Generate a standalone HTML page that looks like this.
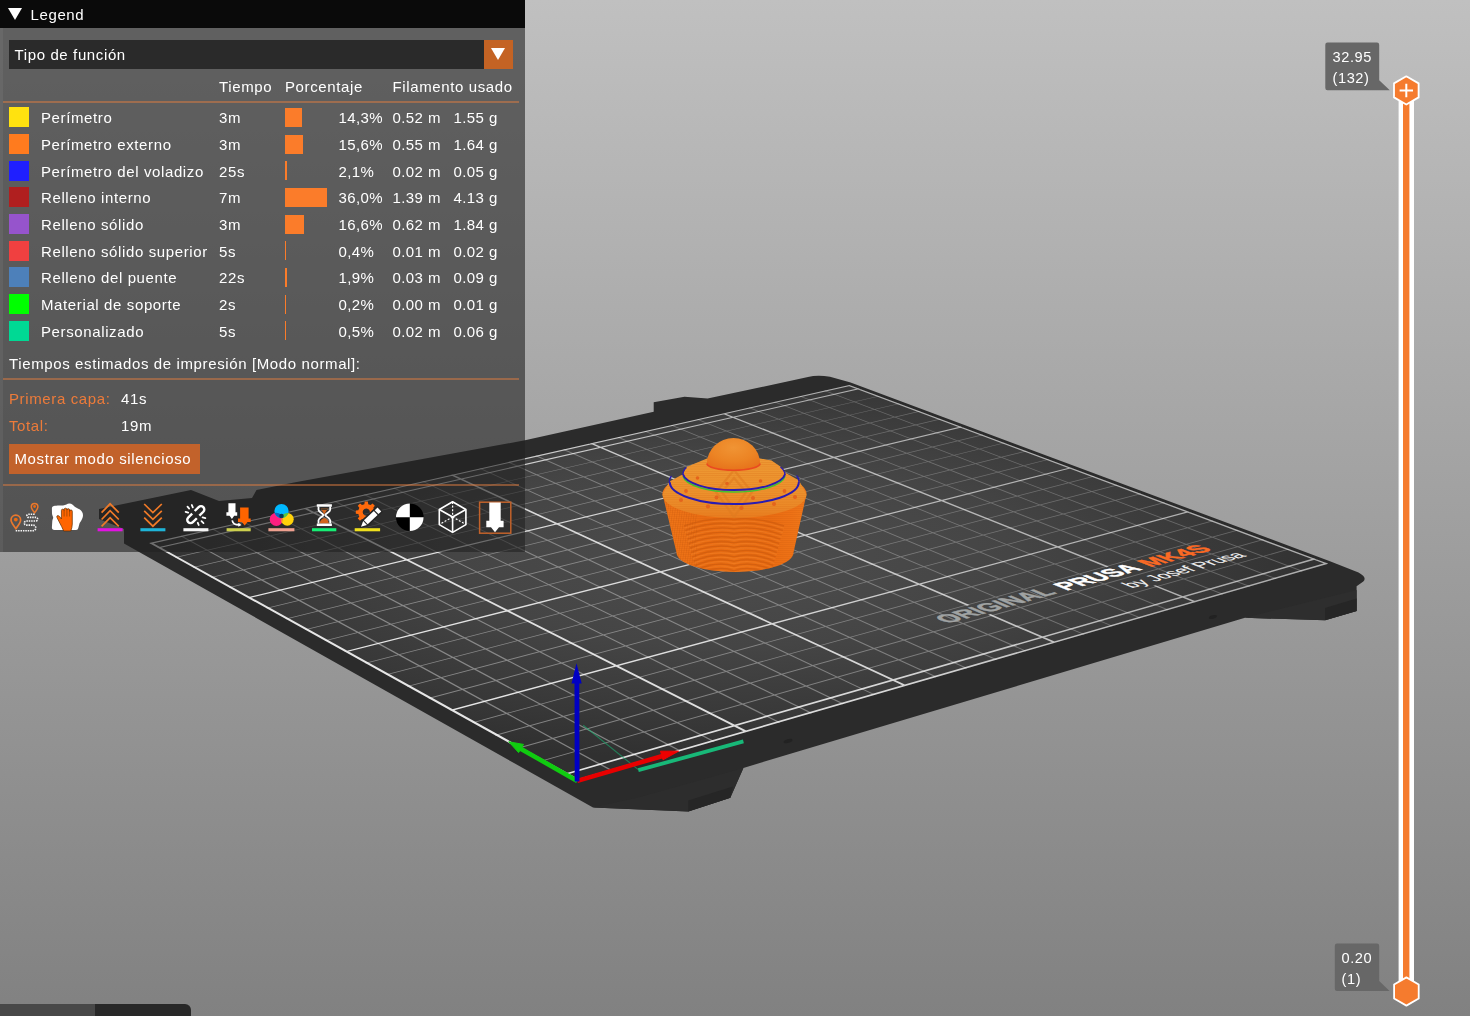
<!DOCTYPE html>
<html lang="es"><head><meta charset="utf-8"><title>PrusaSlicer</title>
<style>

html,body{margin:0;padding:0;}
body{width:1470px;height:1016px;overflow:hidden;background:#9d9d9d;font-family:"Liberation Sans",sans-serif;}
#app{position:relative;width:1470px;height:1016px;overflow:hidden;background:linear-gradient(to bottom,#c0c0c0 0%,#818181 100%);}
svg.scene,svg.slider{position:absolute;left:0;top:0;}
#legend{position:absolute;left:0;top:0;width:524.5px;height:552px;background:rgba(34,34,34,0.6);color:#fff;font-size:15px;letter-spacing:0.62px;line-height:20px;white-space:nowrap;will-change:transform;}
#legend .edge{position:absolute;left:0;top:28px;width:3px;height:524px;background:rgba(255,255,255,0.06);}
#legend .title{position:absolute;left:0;top:0;width:524.5px;height:28.3px;background:#0a0a0a;}
#legend .title .tri{position:absolute;left:7.5px;top:8.3px;width:0;height:0;border-left:7px solid transparent;border-right:7px solid transparent;border-top:12px solid #fff;}
#legend .title span{position:absolute;left:30.5px;top:4.5px;}
#legend .combo{position:absolute;left:9px;top:40px;width:504px;height:29.4px;background:#2a2a2a;}
#legend .combo span{position:absolute;left:5.5px;top:4.9px;}
#legend .combo .btn{position:absolute;right:0;top:0;width:29.4px;height:29.4px;background:#c46324;}
#legend .combo .btn i{position:absolute;left:7.3px;top:8.2px;width:0;height:0;border-left:7.4px solid transparent;border-right:7.4px solid transparent;border-top:12.8px solid #fff;}
#legend .t{position:absolute;height:20px;}
#legend .n{letter-spacing:0.42px;}
#legend .sep{position:absolute;left:3px;width:516px;height:2px;background:rgba(222,124,64,0.5);}
#legend .sw{position:absolute;left:9px;width:20px;height:20px;}
#legend .bar{position:absolute;left:284.8px;height:19px;background:#fb7c2a;}
#legend .or{color:#ed7b3a;}
#legend .button{position:absolute;left:9px;top:444px;width:191px;height:29.5px;background:#c2622b;}
#legend .button span{position:absolute;left:5.5px;top:5px;}
#legend .icons{position:absolute;left:0;top:496px;width:525px;height:44px;}
#legend .icons svg{position:absolute;top:0;}
.tab1{position:absolute;left:0;top:1003.5px;width:95px;height:13px;background:#484848;}
.tab2{position:absolute;left:95px;top:1003.5px;width:95.5px;height:13px;background:#282828;border-top-right-radius:6px;}

</style></head><body>
<div id="app">
<svg class="scene" width="1470" height="1016" viewBox="0 0 1470 1016">
<defs>
<radialGradient id="tex" gradientUnits="userSpaceOnUse" cx="0" cy="0" r="17" gradientTransform="matrix(28.9 -7.33 -21.74 -9.71 733.72 553.31)">
<stop offset="0" stop-color="#4d4d4d"/><stop offset="0.45" stop-color="#454545"/><stop offset="0.8" stop-color="#383838"/><stop offset="1" stop-color="#303030"/></radialGradient>
<linearGradient id="lth" gradientUnits="userSpaceOnUse" x1="577" y1="781" x2="760" y2="400"><stop offset="0" stop-color="#fff" stop-opacity="0.40"/><stop offset="0.5" stop-color="#fff" stop-opacity="0.34"/><stop offset="1" stop-color="#fff" stop-opacity="0.24"/></linearGradient>
<linearGradient id="lbd" gradientUnits="userSpaceOnUse" x1="577" y1="781" x2="760" y2="400"><stop offset="0" stop-color="#fff" stop-opacity="0.88"/><stop offset="0.5" stop-color="#fff" stop-opacity="0.8"/><stop offset="1" stop-color="#fff" stop-opacity="0.6"/></linearGradient>

<linearGradient id="cupg" x1="0" y1="0" x2="1" y2="0">
<stop offset="0" stop-color="#f07618"/><stop offset="0.15" stop-color="#ee7216"/><stop offset="0.3" stop-color="#ea6c12"/><stop offset="0.5" stop-color="#ec7014"/><stop offset="0.75" stop-color="#ea6c12"/><stop offset="0.9" stop-color="#ee7216"/><stop offset="1" stop-color="#f0781a"/>
</linearGradient>
<linearGradient id="frg" x1="0" y1="0" x2="0" y2="1">
<stop offset="0" stop-color="#ee9a34"/><stop offset="0.55" stop-color="#ed932d"/><stop offset="0.85" stop-color="#eb8826"/><stop offset="1" stop-color="#e87c1e"/>
</linearGradient>
<radialGradient id="domeg" cx="0.5" cy="0.3" r="0.75">
<stop offset="0" stop-color="#f09434"/><stop offset="0.55" stop-color="#ec8424"/><stop offset="1" stop-color="#e6701a"/>
</radialGradient>
<pattern id="lay" width="3" height="2" patternUnits="userSpaceOnUse"><rect width="3" height="0.9" fill="#c4560c" opacity="0.18"/></pattern>
<pattern id="lay2" width="3" height="2.2" patternUnits="userSpaceOnUse"><rect width="3" height="0.9" fill="#d8701a" opacity="0.35"/></pattern>
<pattern id="hatch" width="2.4" height="4" patternUnits="userSpaceOnUse" patternTransform="rotate(8)"><rect width="0.9" height="4" fill="#c4560c" opacity="0.3"/></pattern>
<clipPath id="cupclip"><path d="M662.5,494 L676.5,552.5 A58.5,19.5 0 0 0 793.5,552.5 L806.5,494 Z"/></clipPath>
<clipPath id="frclip"><path d="M662.5,494.5 L669.5,481.5 L682.5,474.5 L686.5,467 L707,458.5 L760,458.5 L771.5,460.5 L781,467 L785,472.5 L799,480.5 L806.5,494.5 A72,23.5 0 0 1 662.5,494.5 Z"/></clipPath>

</defs>
<path d="M99,509 L191,490 L219,501 L252,498 L256.5,490 L294,482.4 L525,440.3 L653.7,411.7 L653.7,402.2 L684.5,396.7 L707.6,398.6 L808,377 Q817.5,374.6 830,376.8 L850.6,382.6 L1330.6,561.4 L1358.5,572.4 Q1367.5,577.3 1363.3,581.5 L1356.6,586.3 L1356.6,611 L1325,620.3 L1245,617.8 L743.4,767.9 L730.3,797.8 L688.2,811.4 L593,807.5 L124,543.5 L124,529 L99,519 Z" fill="#2b2b2b"/>
<path d="M1245,617.8 L1356.6,590 L1356.6,611 L1325,620.3 Z" fill="#2e2e2e"/>
<path d="M1325,620.3 L1325,608 L1356.6,598.5 L1356.6,611 Z" fill="#262626"/>
<path d="M743.4,767.9 L730.3,797.8 L688.2,811.4 L593,807.5 L640,797 Z" fill="#2d2d2d"/>
<path d="M688.2,811.4 L688.2,800.5 L733,786.5 L730.3,797.8 Z" fill="#262626"/>
<polygon points="577.3,780.9 1328.3,563.7 849.4,385 149.2,543.1" fill="url(#tex)"/>
<path d="M611.2,771.1 L613,770.58 L181.77,535.75 L180.13,536.12 Z M645.55,761.16 L647.32,760.65 L213.16,528.66 L211.54,529.02 Z M679.46,751.35 L681.21,750.85 L244.21,521.65 L242.6,522.01 Z M712.92,741.68 L714.65,741.18 L274.91,514.72 L273.32,515.07 Z M778.57,722.69 L780.26,722.2 L335.32,501.07 L333.77,501.43 Z M810.77,713.38 L812.44,712.9 L365.04,494.36 L363.5,494.71 Z M842.57,704.18 L844.21,703.71 L394.44,487.73 L392.92,488.07 Z M873.96,695.1 L875.58,694.63 L423.53,481.16 L422.02,481.5 Z M935.58,677.28 L937.17,676.82 L480.78,468.23 L479.3,468.57 Z M965.83,668.53 L967.39,668.08 L508.95,461.87 L507.49,462.2 Z M995.7,659.89 L997.24,659.45 L536.83,455.58 L535.39,455.9 Z M1025.21,651.36 L1026.74,650.92 L564.42,449.35 L563,449.67 Z M1083.17,634.6 L1084.66,634.17 L618.76,437.08 L617.36,437.39 Z M1111.63,626.36 L1113.1,625.94 L645.5,431.04 L644.12,431.35 Z M1139.75,618.23 L1141.2,617.81 L671.98,425.06 L670.61,425.37 Z M1167.54,610.19 L1168.98,609.78 L698.19,419.14 L696.83,419.45 Z M1222.15,594.4 L1223.55,594 L749.82,407.48 L748.49,407.78 Z M1248.98,586.64 L1250.36,586.24 L775.25,401.74 L773.93,402.04 Z M1275.5,578.97 L1276.87,578.58 L800.43,396.06 L799.12,396.35 Z M1301.71,571.39 L1303.07,571 L825.36,390.43 L824.07,390.72 Z M542.12,761.36 L1289.75,549.32 L1288.41,548.81 L540.89,760.68 Z M518.76,748.38 L1264.08,539.74 L1262.76,539.24 L517.56,747.72 Z M495.81,735.63 L1238.79,530.3 L1237.49,529.81 L494.63,734.98 Z M473.24,723.1 L1213.88,521 L1212.59,520.52 L472.08,722.45 Z M429.25,698.66 L1165.13,502.81 L1163.88,502.35 L428.13,698.04 Z M407.81,686.75 L1141.28,493.91 L1140.05,493.45 L406.7,686.14 Z M386.71,675.03 L1117.77,485.14 L1116.55,484.69 L385.63,674.43 Z M365.96,663.51 L1094.59,476.49 L1093.4,476.05 L364.89,662.91 Z M325.47,641.01 L1049.21,459.56 L1048.05,459.13 L324.43,640.44 Z M305.71,630.04 L1027,451.27 L1025.85,450.84 L304.69,629.47 Z M286.26,619.23 L1005.08,443.09 L1003.95,442.67 L285.25,618.67 Z M267.11,608.6 L983.47,435.03 L982.36,434.61 L266.12,608.05 Z M229.71,587.82 L941.13,419.23 L940.04,418.82 L228.75,587.29 Z M211.44,577.67 L920.38,411.49 L919.31,411.09 L210.5,577.15 Z M193.45,567.68 L899.91,403.85 L898.86,403.45 L192.52,567.16 Z M175.73,557.84 L879.71,396.31 L878.67,395.92 L174.82,557.33 Z" fill="url(#lth)"/>
<path d="M745.4,732.28 L748.22,731.47 L305.8,507.74 L303.2,508.33 Z M904.44,686.29 L907.09,685.52 L452.79,474.55 L450.33,475.11 Z M1053.87,643.07 L1056.36,642.35 L990.55,614.09 L988.07,614.78 Z M967.15,605.79 L969.61,605.11 L592.19,443.08 L589.85,443.6 Z M1194.54,602.39 L1196.89,601.71 L1155.51,585.19 L1153.17,585.85 Z M1106.59,567.24 L1108.92,566.6 L724.57,413.18 L722.35,413.69 Z M566.29,774.79 L1316.26,559.21 L1314,558.36 L564.23,773.64 Z M451.44,710.99 L1189.74,512 L1187.64,511.21 L449.55,709.94 Z M345.9,652.36 L1072.13,468.11 L1070.18,467.38 L344.16,651.39 Z M248.58,598.31 L962.52,427.21 L960.7,426.53 L246.98,597.41 Z M158.57,548.31 L860.12,389 L858.41,388.36 L157.08,547.48 Z M577.3,780.9 L580.31,780.03 L151.94,542.48 L149.2,543.1 Z M1326.08,564.34 L1328.3,563.7 L849.4,385 L847.29,385.48 Z M577.3,780.9 L1328.3,563.7 L1326.03,562.85 L575.22,779.75 Z M150.68,543.92 L851.09,385.63 L849.4,385 L149.2,543.1 Z" fill="url(#lbd)"/>
<text transform="matrix(0.28551 -0.07966 0.24787 0.10553 947.55 623.81)" font-family="'Liberation Sans',sans-serif" font-size="86" font-weight="bold" fill="#a0a3a3" textLength="385" lengthAdjust="spacingAndGlyphs" stroke="#a0a3a3" stroke-width="2.5">ORIGINAL</text>
<text transform="matrix(0.27364 -0.07635 0.25050 0.10113 1066.4 590.65)" font-family="'Liberation Sans',sans-serif" font-size="86" font-weight="bold" fill="#ffffff" textLength="280" lengthAdjust="spacingAndGlyphs" stroke="#ffffff" stroke-width="2.5">PRUSA</text>
<text transform="matrix(0.26483 -0.07389 0.25226 0.09786 1150.55 567.17)" font-family="'Liberation Sans',sans-serif" font-size="86" font-weight="bold" fill="#fb6a24" textLength="236" lengthAdjust="spacingAndGlyphs" stroke="#fb6a24" stroke-width="2.5">MK4S</text>
<text transform="matrix(0.26713 -0.07544 0.25552 0.09992 1132.05 588.34)" font-family="'Liberation Sans',sans-serif" font-size="68" font-weight="normal" fill="#f2f2f2" textLength="430" lengthAdjust="spacingAndGlyphs" stroke="#f2f2f2" stroke-width="0.8">by Josef Prusa</text>
<ellipse cx="788" cy="741" rx="4.6" ry="1.9" fill="#222222" transform="rotate(-16 788 741)"/><ellipse cx="1213" cy="617" rx="4.2" ry="1.7" fill="#222222" transform="rotate(-16 1213 617)"/>

<g id="model">
<path d="M662.5,494 L676.5,552.5 A58.5,19.5 0 0 0 793.5,552.5 L806.5,494 A72,24 0 0 0 662.5,494 Z" fill="url(#cupg)"/>
<g clip-path="url(#cupclip)">
<rect x="655" y="490" width="160" height="90" fill="url(#lay)"/>
<rect x="655" y="490" width="42" height="90" fill="url(#hatch)"/>
<g fill="none" stroke="#c6560c" stroke-opacity="0.5" stroke-width="1.4">
<path d="M684.0,526.0 Q711.5,516.5 734,519.5 Q756.5,516.5 784.0,526.0"/>
<path d="M685.2,530.4 Q712.0,520.9 734,524.1 Q756.0,520.9 782.8,530.4"/>
<path d="M686.4,534.8 Q712.6,525.3 734,528.8 Q755.4,525.3 781.6,534.8"/>
<path d="M687.6,539.2 Q713.1,529.7 734,533.5 Q754.9,529.7 780.4,539.2"/>
<path d="M688.8,543.6 Q713.7,534.1 734,538.1 Q754.3,534.1 779.2,543.6"/>
<path d="M690.0,548.0 Q714.2,538.5 734,542.8 Q753.8,538.5 778.0,548.0"/>
<path d="M691.2,552.4 Q714.7,542.9 734,547.4 Q753.3,542.9 776.8,552.4"/>
<path d="M692.4,556.8 Q715.3,547.3 734,552.0 Q752.7,547.3 775.6,556.8"/>
<path d="M693.6,561.2 Q715.8,551.7 734,556.7 Q752.2,551.7 774.4,561.2"/>
<path d="M694.8,565.6 Q716.4,556.1 734,561.4 Q751.6,556.1 773.2,565.6"/>
<path d="M696.0,570.0 Q716.9,560.5 734,566.0 Q751.1,560.5 772.0,570.0"/>
<path d="M697.2,574.4 Q717.4,564.9 734,570.6 Q750.6,564.9 770.8,574.4"/>
<path d="M698.4,578.8 Q718.0,569.3 734,575.3 Q750.0,569.3 769.6,578.8"/>
</g>
<g fill="none" stroke="#f58a30" stroke-opacity="0.35" stroke-width="1.2" transform="translate(0 2.2)">
<path d="M684.0,526.0 Q711.5,516.5 734,519.5 Q756.5,516.5 784.0,526.0"/>
<path d="M685.2,530.4 Q712.0,520.9 734,524.1 Q756.0,520.9 782.8,530.4"/>
<path d="M686.4,534.8 Q712.6,525.3 734,528.8 Q755.4,525.3 781.6,534.8"/>
<path d="M687.6,539.2 Q713.1,529.7 734,533.5 Q754.9,529.7 780.4,539.2"/>
<path d="M688.8,543.6 Q713.7,534.1 734,538.1 Q754.3,534.1 779.2,543.6"/>
<path d="M690.0,548.0 Q714.2,538.5 734,542.8 Q753.8,538.5 778.0,548.0"/>
<path d="M691.2,552.4 Q714.7,542.9 734,547.4 Q753.3,542.9 776.8,552.4"/>
<path d="M692.4,556.8 Q715.3,547.3 734,552.0 Q752.7,547.3 775.6,556.8"/>
<path d="M693.6,561.2 Q715.8,551.7 734,556.7 Q752.2,551.7 774.4,561.2"/>
<path d="M694.8,565.6 Q716.4,556.1 734,561.4 Q751.6,556.1 773.2,565.6"/>
<path d="M696.0,570.0 Q716.9,560.5 734,566.0 Q751.1,560.5 772.0,570.0"/>
<path d="M697.2,574.4 Q717.4,564.9 734,570.6 Q750.6,564.9 770.8,574.4"/>
<path d="M698.4,578.8 Q718.0,569.3 734,575.3 Q750.0,569.3 769.6,578.8"/>
</g>
</g>
<path d="M662.5,494.5 L669.5,481.5 L682.5,474.5 L686.5,467 L707,458.5 L760,458.5 L771.5,460.5 L781,467 L785,472.5 L799,480.5 L806.5,494.5 A72,23.5 0 0 1 662.5,494.5 Z" fill="url(#frg)"/>
<g clip-path="url(#frclip)">
<rect x="655" y="455" width="160" height="70" fill="url(#lay2)"/>
<path d="M734,470 L716,492 L734,517 L752,492 Z M734,478 L722,492 L734,509 L746,492 Z" fill="none" stroke="#e07c20" stroke-width="2.2" stroke-opacity="0.6"/>
<path d="M662.5,497 A72,23.5 0 0 0 806.5,497" fill="none" stroke="#e06c18" stroke-width="3" stroke-opacity="0.5"/>
</g>
<g fill="#e4641c">
<circle cx="681" cy="500" r="2"/><circle cx="686" cy="491" r="1.9"/><circle cx="708" cy="506.500" r="2.1"/><circle cx="716.500" cy="497.500" r="2"/><circle cx="741.500" cy="508" r="2.1"/><circle cx="753" cy="498" r="2"/><circle cx="774" cy="504" r="2"/><circle cx="784.500" cy="491" r="1.9"/><circle cx="795" cy="497" r="2"/><circle cx="697.500" cy="478" r="1.8"/><circle cx="727" cy="483.500" r="1.8"/><circle cx="760.500" cy="481" r="1.8"/>
</g>
<path d="M669.6,483 Q668.8,479 671.5,476 M798.8,483 Q799.6,478.500 796.5,475.500" fill="none" stroke="#2a1cb0" stroke-width="1.4"/>
<path d="M669.8,482.3 A64.5,21.8 0 0 0 798.8,482.3" fill="none" stroke="#2a1cb0" stroke-width="2"/>
<path d="M683,476 A51.2,17.6 0 0 0 785,476" fill="none" stroke="#44c030" stroke-width="1.6"/>
<path d="M683,474.3 A51.2,17.3 0 0 0 785,474.3" fill="none" stroke="#2a1cb0" stroke-width="1.9"/>
<path d="M683,475 Q682.6,470.500 686.5,467.500 M785,475 Q785,470.500 780.5,467" fill="none" stroke="#2a1cb0" stroke-width="1.4"/>
<path d="M706.9,463.500 A26.6,25.6 0 0 1 760.1,463.500 A26.6,6.8 0 0 1 706.9,463.500 Z" fill="url(#domeg)"/>
<path d="M706.9,463.500 A26.6,6.8 0 0 0 760.1,463.500" fill="none" stroke="#ea4a20" stroke-width="1.6"/>
</g>


<g id="axes">
<path d="M583.2,725.3 L638.3,769.6" stroke="#18b070" stroke-width="1.1" stroke-opacity="0.6" fill="none"/>
<path d="M577.3,780.9 L666,755" stroke="#e80000" stroke-width="4.6" fill="none"/>
<path d="M660.5,751.2 L678.6,751.2 L663,759.8 Z" fill="#f00000" stroke="#f00000" stroke-width="1" stroke-linejoin="round"/>
<path d="M638.3,770.2 L743.4,741.4" stroke="#18b878" stroke-width="3.8" fill="none"/>
<path d="M577.3,780.9 L518,747.2" stroke="#10cc10" stroke-width="4.6" fill="none"/>
<path d="M508.8,741.8 L523.5,744.4 L518.6,752.6 Z" fill="#10cc10" stroke="#10cc10" stroke-width="1" stroke-linejoin="round"/>
<path d="M577.1,781.5 L576.9,682" stroke="#0000c4" stroke-width="4.8" fill="none"/>
<path d="M576.5,663.3 L581.7,683.5 L571.5,683.5 Z" fill="#0000c4"/>
</g>

</svg>
<div id="legend"><div class="edge"></div>
<div class="title"><div class="tri"></div><span>Legend</span></div>
<div class="combo"><span>Tipo de función</span><div class="btn"><i></i></div></div>
<div class="t" style="left:219px;top:76.5px">Tiempo</div><div class="t" style="left:285px;top:76.5px">Porcentaje</div><div class="t" style="left:392.5px;top:76.5px">Filamento usado</div>
<div class="sep" style="top:100.8px"></div>
<div class="sw" style="top:107.4px;background:#ffe20f"></div>
<div class="t" style="left:41px;top:108.2px">Perímetro</div>
<div class="t" style="left:219px;top:108.2px">3m</div>
<div class="bar" style="top:107.9px;width:16.9px"></div>
<div class="t n" style="left:338.5px;top:108.2px">14,3%</div>
<div class="t n" style="left:392.5px;top:108.2px">0.52 m</div>
<div class="t n" style="left:453.5px;top:108.2px">1.55 g</div>
<div class="sw" style="top:134.1px;background:#ff7b1e"></div>
<div class="t" style="left:41px;top:134.9px">Perímetro externo</div>
<div class="t" style="left:219px;top:134.9px">3m</div>
<div class="bar" style="top:134.6px;width:18.4px"></div>
<div class="t n" style="left:338.5px;top:134.9px">15,6%</div>
<div class="t n" style="left:392.5px;top:134.9px">0.55 m</div>
<div class="t n" style="left:453.5px;top:134.9px">1.64 g</div>
<div class="sw" style="top:160.7px;background:#1f1fff"></div>
<div class="t" style="left:41px;top:161.5px">Perímetro del voladizo</div>
<div class="t" style="left:219px;top:161.5px">25s</div>
<div class="bar" style="top:161.2px;width:2.5px"></div>
<div class="t n" style="left:338.5px;top:161.5px">2,1%</div>
<div class="t n" style="left:392.5px;top:161.5px">0.02 m</div>
<div class="t n" style="left:453.5px;top:161.5px">0.05 g</div>
<div class="sw" style="top:187.4px;background:#b01f1f"></div>
<div class="t" style="left:41px;top:188.2px">Relleno interno</div>
<div class="t" style="left:219px;top:188.2px">7m</div>
<div class="bar" style="top:187.9px;width:42.5px"></div>
<div class="t n" style="left:338.5px;top:188.2px">36,0%</div>
<div class="t n" style="left:392.5px;top:188.2px">1.39 m</div>
<div class="t n" style="left:453.5px;top:188.2px">4.13 g</div>
<div class="sw" style="top:214.1px;background:#9654cc"></div>
<div class="t" style="left:41px;top:214.9px">Relleno sólido</div>
<div class="t" style="left:219px;top:214.9px">3m</div>
<div class="bar" style="top:214.6px;width:19.6px"></div>
<div class="t n" style="left:338.5px;top:214.9px">16,6%</div>
<div class="t n" style="left:392.5px;top:214.9px">0.62 m</div>
<div class="t n" style="left:453.5px;top:214.9px">1.84 g</div>
<div class="sw" style="top:240.8px;background:#f04040"></div>
<div class="t" style="left:41px;top:241.6px">Relleno sólido superior</div>
<div class="t" style="left:219px;top:241.6px">5s</div>
<div class="bar" style="top:241.2px;width:0.8px"></div>
<div class="t n" style="left:338.5px;top:241.6px">0,4%</div>
<div class="t n" style="left:392.5px;top:241.6px">0.01 m</div>
<div class="t n" style="left:453.5px;top:241.6px">0.02 g</div>
<div class="sw" style="top:267.4px;background:#4d80ba"></div>
<div class="t" style="left:41px;top:268.2px">Relleno del puente</div>
<div class="t" style="left:219px;top:268.2px">22s</div>
<div class="bar" style="top:267.9px;width:2.2px"></div>
<div class="t n" style="left:338.5px;top:268.2px">1,9%</div>
<div class="t n" style="left:392.5px;top:268.2px">0.03 m</div>
<div class="t n" style="left:453.5px;top:268.2px">0.09 g</div>
<div class="sw" style="top:294.1px;background:#00ff00"></div>
<div class="t" style="left:41px;top:294.9px">Material de soporte</div>
<div class="t" style="left:219px;top:294.9px">2s</div>
<div class="bar" style="top:294.6px;width:0.8px"></div>
<div class="t n" style="left:338.5px;top:294.9px">0,2%</div>
<div class="t n" style="left:392.5px;top:294.9px">0.00 m</div>
<div class="t n" style="left:453.5px;top:294.9px">0.01 g</div>
<div class="sw" style="top:320.8px;background:#00d994"></div>
<div class="t" style="left:41px;top:321.6px">Personalizado</div>
<div class="t" style="left:219px;top:321.6px">5s</div>
<div class="bar" style="top:321.3px;width:0.8px"></div>
<div class="t n" style="left:338.5px;top:321.6px">0,5%</div>
<div class="t n" style="left:392.5px;top:321.6px">0.02 m</div>
<div class="t n" style="left:453.5px;top:321.6px">0.06 g</div>
<div class="t" style="left:9px;top:354px">Tiempos estimados de impresión [Modo normal]:</div>
<div class="sep" style="top:378px"></div>
<div class="t or" style="left:9px;top:389px">Primera capa:</div><div class="t" style="left:121px;top:389px">41s</div>
<div class="t or" style="left:9px;top:415.7px">Total:</div><div class="t" style="left:121px;top:415.7px">19m</div>
<div class="button"><span>Mostrar modo silencioso</span></div>
<div class="sep" style="top:484px"></div>
<div class="icons"><svg width="525" height="52" viewBox="0 494 525 52" style="left:0;top:-2px">
<!-- travel -->
<g fill="none" stroke="#e8782e" stroke-width="1.7">
<path d="M15.9,528.6 C12.6,524.4 11,522.4 11,520 a4.8,4.8 0 0 1 9.600,0 C20.600,522.4 19.200,524.4 15.9,528.600 Z"/>
<path d="M34.6,512.7 C32.3,509.8 31.3,508.4 31.3,506.7 a3.3,3.3 0 0 1 6.600,0 C37.900,508.4 36.900,509.800 34.600,512.700 Z" stroke-width="1.5"/>
</g>
<circle cx="15.8" cy="519.6" r="1.9" fill="#ee6a10"/><circle cx="34.6" cy="506.5" r="1.4" fill="#ee6a10"/>
<path d="M34.6,514.3 H28.4 a1.55,1.55 0 0 0 0,3.1 H35.900 a1.800,1.800 0 0 1 0,3.600 H26.300 a2.050,2.050 0 0 0 0,4.100 H33 a2.800,2.800 0 0 1 0,5.600 H15" fill="none" stroke="#f6f6f6" stroke-width="1.6" stroke-dasharray="1.5 0.9"/>
<!-- hand on blob -->
<path d="M52.9,506.4 C55,505.300 60,505.600 63,505.500 C66,505.300 67,503.600 69.300,503.600 C72,503.600 73,505.400 74.200,506.200 C76,507.600 78,508.300 79.500,509.300 C81.800,510.800 83,513 83,515.200 C83,517 82.300,518.500 81.700,519.700 C80.800,521.500 79.800,522.500 79.500,523.500 C79,525 78.800,526.500 78.300,528 C77.900,529.300 77.500,529.900 76,529.900 L54.500,529.900 C52.600,529.900 51.900,529 51.900,527.500 L52.300,521 C52.400,519.500 53.300,518.500 53.200,517.500 C53.100,516.300 52.100,515.500 52,513.500 L51.900,508.500 C51.900,507.300 52.200,506.800 52.900,506.400 Z" fill="#ffffff"/>
<path d="M63.700,531 L61.600,526.500 L57,517.600 Q56.200,515.600 58,515.500 Q59.600,515.700 61.400,519 L61.400,510.500 a1.350,1.350 0 0 1 2.700,0 V509.600 a1.400,1.400 0 0 1 2.800,0 V510 a1.350,1.350 0 0 1 2.700,0 V511.300 a1.350,1.350 0 0 1 2.700,0 L72.300,524 Q72.200,527.500 70.800,531 Z" fill="#ff6500" stroke="#5e2c00" stroke-width="0.700" stroke-linejoin="round"/>
<path d="M64.100,510.500 V516.500 M66.900,509.800 V516.500 M69.600,510.200 V516.500" stroke="#7a3a00" stroke-width="0.600" fill="none"/>
<!-- chevrons -->
<g fill="none" stroke="#f07a28" stroke-width="1.7" stroke-linecap="butt">
<path d="M101.600,512.600 L110.100,503.800 L118.800,512.600"/><path d="M101.600,519.500 L110.100,510.700 L118.800,519.500"/><path d="M101.600,526.400 L110.100,517.600 L118.800,526.400"/>
<path d="M144.200,504 L152.900,512.600 L161.800,504"/><path d="M144.200,510.800 L152.900,519.400 L161.800,510.800"/><path d="M144.200,517.600 L152.900,526.200 L161.800,517.600"/>
</g>
<rect x="97.600" y="528.200" width="25" height="3.1" fill="#e312e3"/>
<rect x="140.400" y="528.200" width="25" height="3.100" fill="#1eb4d8"/>
<!-- broken chain -->
<g transform="translate(195.700 514.700) rotate(-45)" fill="none" stroke="#ffffff" stroke-width="2.400" stroke-linecap="butt">
<path d="M-1.700,-3.300 H-7.300 A3.300,3.300 0 0 0 -7.300,3.300 H-1.700"/>
<path d="M1.900,3.300 H7.500 A3.300,3.300 0 0 0 7.500,-3.300 H1.900"/>
</g>
<g fill="none" stroke="#ffffff" stroke-width="1.800" stroke-linecap="round">
<path d="M191.800,505 L192.800,507.400 M187.500,506.700 L189.200,508.600 M185.600,511.800 L188.200,512.600"/>
<path d="M202.600,517.400 L205.400,518.100 M201.500,521.200 L203.500,523.100 M197.800,522.800 L198.700,525"/>
</g>
<rect x="183.400" y="528.200" width="25" height="3.100" fill="#f6f6f6"/>
<!-- arrows -->
<path d="M228.400,503.200 H235.500 V512.200 H237.200 V515.700 H234.200 L231.900,518.900 L229.600,515.700 H226.400 V512.200 H228.400 Z" fill="#ffffff"/>
<path d="M232.200,520.300 C232.800,523.300 235.500,524.900 239,524.900" fill="none" stroke="#ffffff" stroke-width="1.700"/>
<path d="M238.300,522.800 L241.600,524.900 L238.300,526.700 Z" fill="#ffffff"/>
<path d="M240.100,507.600 H248.600 V518.600 H250.700 V522.100 H247.500 L244.700,525.600 L241.900,522.100 H238 V518.600 H240.100 Z" fill="#ff6400"/>
<rect x="226.600" y="528.200" width="24.100" height="3.100" fill="#cdd04e"/>
<!-- color circles -->
<clipPath id="cc1"><circle cx="281.500" cy="511" r="7.100"/></clipPath>
<clipPath id="cc2"><circle cx="276.300" cy="519.300" r="6.600"/></clipPath>
<circle cx="276.300" cy="519.300" r="6.600" fill="#ff1f80"/>
<circle cx="287.300" cy="519.300" r="6.400" fill="#ffd20a"/>
<circle cx="287.300" cy="519.300" r="6.400" fill="#ff7a3c" clip-path="url(#cc2)"/>
<circle cx="281.500" cy="511" r="7.100" fill="#00b8ff"/>
<circle cx="276.300" cy="519.300" r="6.600" fill="#0a68c0" clip-path="url(#cc1)"/>
<circle cx="287.300" cy="519.300" r="6.400" fill="#58c63a" clip-path="url(#cc1)"/>
<circle cx="281.500" cy="516" r="2.300" fill="#063858"/>
<rect x="268.400" y="528.200" width="26" height="3.100" fill="#efa08f"/>
<!-- hourglass -->
<path d="M320.800,508.600 H327.800 L324.300,514.600 Z" fill="#d2641c"/>
<path d="M320.800,508.600 H327.800 L327,510 H321.600 Z" fill="#4a3a28"/>
<path d="M319.600,523.400 C320.400,520 322.500,518.300 324.300,518.300 C326.100,518.300 328.200,520 329,523.400 Z" fill="#d2641c"/>
<g fill="none" stroke="#ffffff">
<path d="M316.800,505.500 H331.900 M316.800,524.700 H331.900" stroke-width="2.600"/>
<path d="M318.500,506.500 V509.800 C318.500,512.300 323,513.300 323.400,515 C323,516.700 318.500,517.700 318.500,520.300 V523.600 M330.200,506.500 V509.800 C330.200,512.300 325.700,513.300 325.300,515 C325.700,516.700 330.200,517.700 330.200,520.300 V523.600" stroke-width="1.800"/>
</g>
<rect x="312" y="528.200" width="24.300" height="3.100" fill="#16ee74"/>
<!-- gear + pencil -->
<clipPath id="gearclip"><path d="M350,495 H388.500 L350.800,530.600 L350,531 Z"/></clipPath>
<path d="M364.39,504.13 L364.72,501.62 L367.88,501.62 L368.21,504.13 L370.58,505.11 L372.60,503.57 L374.83,505.80 L373.29,507.82 L374.27,510.19 L376.78,510.52 L376.78,513.68 L374.27,514.01 L373.29,516.38 L374.83,518.40 L372.60,520.63 L370.58,519.09 L368.21,520.07 L367.88,522.58 L364.72,522.58 L364.39,520.07 L362.02,519.09 L360.00,520.63 L357.77,518.40 L359.31,516.38 L358.33,514.01 L355.82,513.68 L355.82,510.52 L358.33,510.19 L359.31,507.82 L357.77,505.80 L360.00,503.57 L362.02,505.11 Z M366.30,508.50 a3.60,3.60 0 1 0 0.01,0 Z" fill="#ff6a0c" fill-rule="evenodd" clip-path="url(#gearclip)"/>
<g transform="translate(361 526.800) rotate(-43.300)">
<path d="M-1.400,0 L5,-4.200 H26.300 V4.200 H5 Z" fill="#252525"/>
<path d="M0,0 L5.600,-2.700 V2.700 Z" fill="#ffffff"/>
<rect x="6.600" y="-2.700" width="13.600" height="5.400" fill="#ffffff"/>
<rect x="21.400" y="-2.700" width="3.900" height="5.400" fill="#ffffff"/>
</g>
<rect x="354.700" y="528.200" width="25.400" height="3.100" fill="#efe01e"/>
<!-- cog -->
<circle cx="409.800" cy="517.200" r="13.800" fill="#000000"/>
<path d="M409.800,517.200 V503.400 A13.800,13.800 0 0 0 396,517.200 Z M409.800,517.200 V531 A13.800,13.800 0 0 0 423.600,517.200 Z" fill="#ffffff"/>
<!-- cube -->
<g fill="none" stroke="#ffffff" stroke-width="1.600" stroke-linejoin="round">
<path d="M452.600,501.800 L465.900,509.500 V524.600 L452.600,532.400 L439.300,524.600 V509.500 Z"/>
<path d="M439.300,509.500 L452.600,517 L465.900,509.500 M452.600,517 V532.400"/>
<path d="M452.600,502 V517 M452.600,517 L439.600,524.400 M452.600,517 L465.600,524.400" stroke-dasharray="2 1.600" stroke-width="1.200"/>
</g>
<!-- tool marker -->
<rect x="479.600" y="502.200" width="31.200" height="31" fill="none" stroke="#c2622b" stroke-width="1.500"/>
<path d="M489.300,502.400 H500.700 V520.800 H503.600 V527.300 H499 L495,532.300 L491,527.300 H486.300 V520.800 H489.300 Z" fill="#ffffff"/>
</svg></div>
</div>
<svg class="slider" width="1470" height="1016" viewBox="0 0 1470 1016">
<rect x="1398.6" y="90" width="15.4" height="900" fill="#ffffff"/>
<rect x="1403" y="90" width="6.4" height="900" fill="#f57b2e"/>
<path d="M1327.5,42.5 h49.5 a2.2,2.2 0 0 1 2.2,2.2 v35.5 l10.6,10 h-62.3 a2.2,2.2 0 0 1 -2.2,-2.2 v-43.3 a2.2,2.2 0 0 1 2.2,-2.2 Z" fill="#676767"/>
<path d="M1337,943.5 h40 a2.2,2.2 0 0 1 2.2,2.2 v35.3 l10.4,10 h-52.6 a2.2,2.2 0 0 1 -2.2,-2.2 v-43.1 a2.2,2.2 0 0 1 2.2,-2.2 Z" fill="#676767"/>
<polygon points="1406.3,76.3 1418.6,83.4 1418.6,97.4 1406.3,104.5 1394,97.4 1394,83.4" fill="#f57b2e" stroke="#ffffff" stroke-width="1.8" stroke-linejoin="round"/>
<path d="M1399.6,90.5 h13.4 M1406.3,83.8 v13.4" stroke="#ffffff" stroke-width="2" fill="none"/>
<polygon points="1406.4,977.4 1418.7,984.5 1418.7,998.5 1406.4,1005.6 1394.1,998.5 1394.1,984.5" fill="#f57b2e" stroke="#ffffff" stroke-width="1.8" stroke-linejoin="round"/>
<g font-family="'Liberation Sans',sans-serif" font-size="14.6" fill="#ffffff" letter-spacing="0.55">
<text x="1332.6" y="61.5">32.95</text><text x="1332.6" y="83">(132)</text>
<text x="1341.6" y="963">0.20</text><text x="1341.6" y="984">(1)</text>
</g>
</svg>
<div class="tab1"></div><div class="tab2"></div>
</div>
</body></html>
